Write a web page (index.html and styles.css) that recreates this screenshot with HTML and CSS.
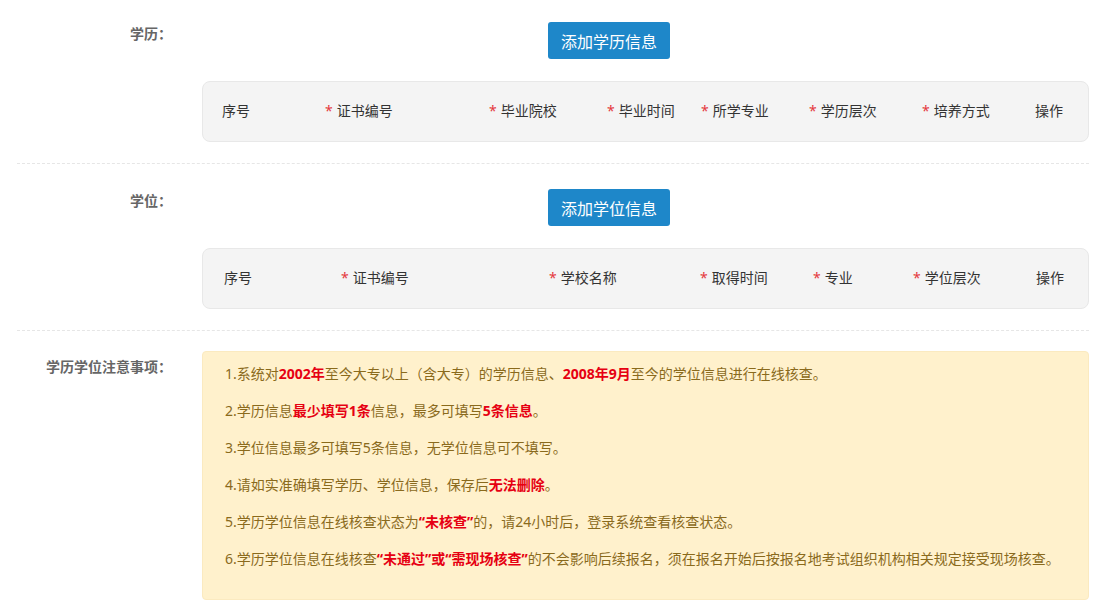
FILE: index.html
```html
<!DOCTYPE html>
<html lang="zh-CN">
<head>
    <meta charset="UTF-8">
    <meta name="viewport" content="width=device-width, initial-scale=1.0">
    <title>学历学位信息</title>
    <link rel="stylesheet" href="styles.css">
</head>
<body>
    <div class="page">
        <div class="row first">
            <div class="label">学历：</div>
            <div class="content">
                <div class="btn-line">
                    <button class="btn-add">添加学历信息</button>
                </div>
                <div class="table-head xl">
                    <span>序号</span>
                    <span><i>*</i>证书编号</span>
                    <span><i>*</i>毕业院校</span>
                    <span><i>*</i>毕业时间</span>
                    <span><i>*</i>所学专业</span>
                    <span><i>*</i>学历层次</span>
                    <span><i>*</i>培养方式</span>
                    <span>操作</span>
                </div>
            </div>
        </div>

        <div class="row">
            <div class="label">学位：</div>
            <div class="content">
                <div class="btn-line">
                    <button class="btn-add">添加学位信息</button>
                </div>
                <div class="table-head xw">
                    <span>序号</span>
                    <span><i>*</i>证书编号</span>
                    <span><i>*</i>学校名称</span>
                    <span><i>*</i>取得时间</span>
                    <span><i>*</i>专业</span>
                    <span><i>*</i>学位层次</span>
                    <span>操作</span>
                </div>
            </div>
        </div>

        <div class="row last">
            <div class="label notice-label">学历学位注意事项：</div>
            <div class="content">
                <div class="notice">
                    <p>1.系统对<b>2002年</b>至今大专以上（含大专）的学历信息、<b>2008年9月</b>至今的学位信息进行在线核查。</p>
                    <p>2.学历信息<b>最少填写1条</b>信息，最多可填写<b>5条信息</b>。</p>
                    <p>3.学位信息最多可填写5条信息，无学位信息可不填写。</p>
                    <p>4.请如实准确填写学历、学位信息，保存后<b>无法删除</b>。</p>
                    <p>5.学历学位信息在线核查状态为<b>“未核查”</b>的，请24小时后，登录系统查看核查状态。</p>
                    <p>6.学历学位信息在线核查<b>“未通过”或“需现场核查”</b>的不会影响后续报名，须在报名开始后按报名地考试组织机构相关规定接受现场核查。</p>
                </div>
            </div>
        </div>
    </div>
</body>
</html>
```

FILE: styles.css
```css
body {
    margin: 0;
    padding: 0;
    background: #fff;
    font-family: "Noto Sans", "Noto Sans CJK SC", sans-serif;
    font-size: 14px;
    color: #333;
}
.page {
    padding: 0 20px 0 17px;
}
.row {
    display: flex;
    padding: 25px 0 21px;
    border-bottom: 1px dashed #e6e6e6;
}
.row.first {
    padding-top: 22px;
}
.row.last {
    padding-top: 20px;
    border-bottom: none;
}
.label {
    width: 155px;
    flex-shrink: 0;
    text-align: right;
    font-weight: bold;
    color: #666;
    line-height: 20px;
    padding-top: 2px;
}
.notice-label {
    padding-top: 6px;
}
.content {
    margin-left: 30px;
    flex: 1;
}
.btn-line {
    padding-left: 346px;
    margin-bottom: 22px;
}
.btn-add {
    height: 37px;
    padding: 0 13px;
    border: none;
    border-radius: 3px;
    background: #1e87c9;
    color: #fff;
    font-family: "Noto Sans CJK SC", sans-serif;
    font-size: 16px;
    cursor: pointer;
}
.btn-add:hover {
    background: #1877b3;
}
.table-head {
    display: grid;
    align-items: center;
    height: 56px;
    padding-bottom: 3px;
    background: #f4f4f4;
    border: 1px solid #e8e8e8;
    border-radius: 8px;
    color: #333;
    white-space: nowrap;
}
.table-head.xl {
    padding-left: 19px;
    grid-template-columns: 103px 164px 118px 94px 108px 113px 113px auto;
}
.table-head.xw {
    padding-left: 21px;
    grid-template-columns: 117px 208px 151px 113px 100px 123px auto;
}
.table-head i {
    font-style: normal;
    color: #e4393c;
    margin-right: 4px;
}
.notice {
    background: #fff1cc;
    border: 1px solid #fbeac0;
    border-radius: 4px;
    padding: 3px 22px 22px;
    color: #8a6a1c;
}
.notice p {
    margin: 0;
    line-height: 37px;
    white-space: nowrap;
}
.notice b {
    color: #e60012;
}
```
